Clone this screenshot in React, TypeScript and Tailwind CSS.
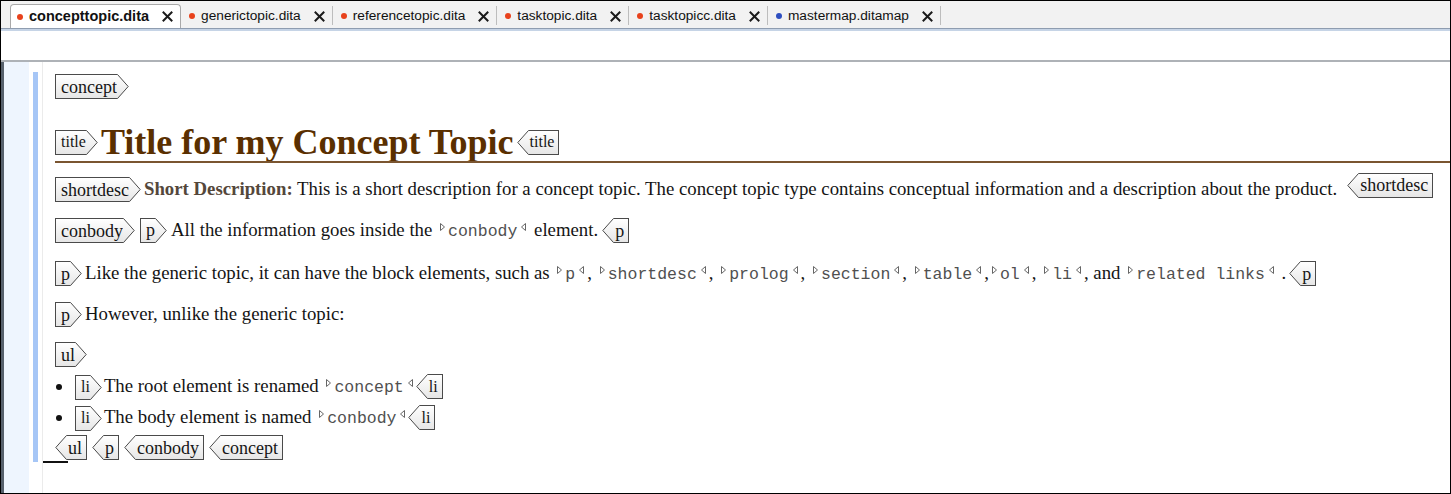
import React from "react";

const serif = "font-['Liberation_Serif','Times_New_Roman',serif]";

type TagProps = { name: string; end?: boolean; small?: boolean };

function Arrow({ end }: { end?: boolean }) {
  // pointed side of a tag box
  return (
    <svg width="12" height="25" viewBox="0 0 12 25" className="block shrink-0">
      {end ? (
        <>
          <path d="M12 0 L11 0 L0.8 12.5 L11 25 L12 25 Z" fill="url(#tagfill)" />
          <polyline
            points="12,0.5 11.5,0.5 0.8,12.5 11.5,24.5 12,24.5"
            fill="none"
            stroke="#4a4a4a"
            strokeWidth="1"
          />
        </>
      ) : (
        <>
          <path d="M0 0 L1 0 L11.2 12.5 L1 25 L0 25 Z" fill="url(#tagfill)" />
          <polyline
            points="0,0.5 0.5,0.5 11.2,12.5 0.5,24.5 0,24.5"
            fill="none"
            stroke="#4a4a4a"
            strokeWidth="1"
          />
        </>
      )}
    </svg>
  );
}

function Tag({ name, end, small }: TagProps) {
  const box = (
    <span
      className={`flex h-full items-center bg-gradient-to-b from-white to-[#e6e6e6] ${
        end ? "border-y border-r pl-[1px] pr-[4px]" : "border-y border-l pl-[5px] pr-0"
      } border-[#4a4a4a] ${small ? "text-[16px]" : "text-[18px]"} leading-none text-[#151515]`}
    >
      {name}
    </span>
  );
  return (
    <span className={`inline-flex h-[25px] shrink-0 items-stretch ${serif}`}>
      {end ? (
        <>
          <Arrow end />
          {box}
        </>
      ) : (
        <>
          {box}
          <Arrow />
        </>
      )}
    </span>
  );
}

function Code({ children }: { children: React.ReactNode }) {
  return (
    <span className="whitespace-nowrap">
      <svg width="5" height="8" viewBox="0 0 5 8" className="ml-[3px] mr-[3px] inline-block align-[5px]">
        <path d="M0.5 0.5 L4.5 4 L0.5 7.5 Z" fill="white" stroke="#666" strokeWidth="1" />
      </svg>
      <span className="font-['Liberation_Mono','Courier_New',monospace] text-[16.5px] text-[#505050]">
        {children}
      </span>
      <svg width="5" height="8" viewBox="0 0 5 8" className="ml-[4px] mr-[3px] inline-block align-[5px]">
        <path d="M4.5 0.5 L0.5 4 L4.5 7.5 Z" fill="white" stroke="#666" strokeWidth="1" />
      </svg>
    </span>
  );
}

function CloseX() {
  return (
    <svg width="11" height="11" viewBox="0 0 11 11" className="block shrink-0">
      <path d="M1.5 1.5 L9.5 9.5 M9.5 1.5 L1.5 9.5" stroke="#1a1a1a" strokeWidth="2" strokeLinecap="square" />
    </svg>
  );
}

type TabInfo = { label: string; blue?: boolean; active?: boolean };

const tabs: TabInfo[] = [
  { label: "concepttopic.dita", active: true },
  { label: "generictopic.dita" },
  { label: "referencetopic.dita" },
  { label: "tasktopic.dita" },
  { label: "tasktopicc.dita" },
  { label: "mastermap.ditamap", blue: true },
];

function Tab({ label, blue, active }: TabInfo) {
  return (
    <div
      className={
        active
          ? "flex h-[24px] items-center rounded-t-[4px] border border-b-0 border-[#a9a9a9] bg-white pl-[6px] pr-[7px] text-[14.5px] font-bold"
          : "flex h-[24px] items-center pl-[8px] pr-[7px] text-[13.7px]"
      }
    >
      <span
        className={`h-[6px] w-[6px] rounded-full ${blue ? "bg-[#2f4fc0]" : "bg-[#e8421c]"}`}
      />
      <span className="ml-[6px] text-[#111]">{label}</span>
      <span className="ml-[13px]">
        <CloseX />
      </span>
    </div>
  );
}

export default function App() {
  return (
    <div className="flex h-[494px] w-[1451px] flex-col overflow-hidden border border-black bg-white font-['Liberation_Sans',Arial,sans-serif]">
      <svg width="0" height="0" className="block h-0 w-0">
        <defs>
          <linearGradient id="tagfill" x1="0" y1="0" x2="0" y2="1">
            <stop offset="0" stopColor="#ffffff" />
            <stop offset="1" stopColor="#e6e6e6" />
          </linearGradient>
        </defs>
      </svg>

      {/* tab strip */}
      <div className="flex h-[27px] shrink-0 items-end bg-[#f2f2f2] pl-[9px]">
        {tabs.map((t, i) => (
          <React.Fragment key={t.label}>
            <Tab {...t} />
            {i > 0 && <span className="mb-[3px] h-[19px] w-px bg-[#bdbdbd]" />}
          </React.Fragment>
        ))}
      </div>
      <div className="h-px shrink-0 bg-[#8f9db0]" />
      <div className="h-[2px] shrink-0 bg-[#c6d4e6]" />
      <div className="h-[29px] shrink-0 bg-white" />
      <div className="h-[2px] shrink-0 bg-[#aeb2b7]" />

      {/* editor */}
      <div className="flex min-h-0 flex-1">
        <div className="w-[3px] shrink-0 bg-[#56606c]" />
        <div className="w-[25px] shrink-0 bg-[#eef5fe]" />
        <div className="w-[14px] shrink-0 border-r border-[#ebebeb] pl-[4px] pt-[10px]">
          <div className="h-[390px] w-[5px] bg-[#a6c6f6]" />
        </div>

        <div className={`flex min-w-0 flex-1 flex-col text-[18.8px] text-[#141414] ${serif}`}>
          <div className="mt-[12px] flex h-[25px] items-center pl-[12px]">
            <Tag name="concept" />
          </div>

          <div className="mt-[25px] flex h-[36px] items-center pl-[12px]">
            <Tag name="title" small />
            <span className="mx-[3px] text-[36px] font-bold leading-none text-[#5a2f00]">
              Title for my Concept Topic
            </span>
            <Tag name="title" end small />
          </div>
          <div className="ml-[12px] mt-[1px] h-[2px] bg-[#7a5530]" />

          <div className="mt-[14px] flex h-[25px] items-center pl-[12px] pr-[11px]">
            <Tag name="shortdesc" />
            <span className="ml-[3px] whitespace-nowrap">
              <span className="font-bold text-[#54473b]">Short Description:</span> This is a short
              description for a concept topic. The concept topic type contains conceptual
              information and a description about the product.
            </span>
            <span className="ml-[10px]">
              <Tag name="shortdesc" end />
            </span>
          </div>

          <div className="mt-[16px] flex h-[25px] items-center pl-[12px]">
            <Tag name="conbody" />
            <span className="ml-[5px]">
              <Tag name="p" />
            </span>
            <span className="ml-[4px] mr-[4px] whitespace-nowrap">
              All the information goes inside the <Code>conbody</Code> element.
            </span>
            <Tag name="p" end />
          </div>

          <div className="mt-[18px] flex h-[25px] items-center pl-[12px]">
            <Tag name="p" />
            <span className="ml-[3px] mr-[3px] whitespace-nowrap">
              Like the generic topic, it can have the block elements, such as <Code>p</Code>,{" "}
              <Code>shortdesc</Code>, <Code>prolog</Code>, <Code>section</Code>,{" "}
              <Code>table</Code>,<Code>ol</Code>, <Code>li</Code>, and{" "}
              <Code>related links</Code> .
            </span>
            <Tag name="p" end />
          </div>

          <div className="mt-[16px] flex h-[25px] items-center pl-[12px]">
            <Tag name="p" />
            <span className="ml-[3px]">However, unlike the generic topic:</span>
          </div>

          <div className="mt-[15px] flex h-[25px] items-center pl-[12px]">
            <Tag name="ul" />
          </div>

          <div className="mt-[7px] flex h-[25px] items-center pl-[13px]">
            <span className="h-[6px] w-[6px] rounded-full bg-[#111]" />
            <span className="ml-[13px]">
              <Tag name="li" small />
            </span>
            <span className="ml-[2px] whitespace-nowrap">
              The root element is renamed <Code>concept</Code>
            </span>
            <Tag name="li" end small />
          </div>

          <div className="mt-[6px] flex h-[25px] items-center pl-[13px]">
            <span className="h-[6px] w-[6px] rounded-full bg-[#111]" />
            <span className="ml-[13px]">
              <Tag name="li" small />
            </span>
            <span className="ml-[2px] whitespace-nowrap">
              The body element is named <Code>conbody</Code>
            </span>
            <Tag name="li" end small />
          </div>

          <div className="mt-[5px] flex h-[25px] items-center gap-[5px] pl-[12px]">
            <Tag name="ul" end />
            <Tag name="p" end />
            <Tag name="conbody" end />
            <Tag name="concept" end />
          </div>
          <div className="mt-[1px] h-[2px] w-[25px] bg-[#111]" />
        </div>
      </div>
    </div>
  );
}
